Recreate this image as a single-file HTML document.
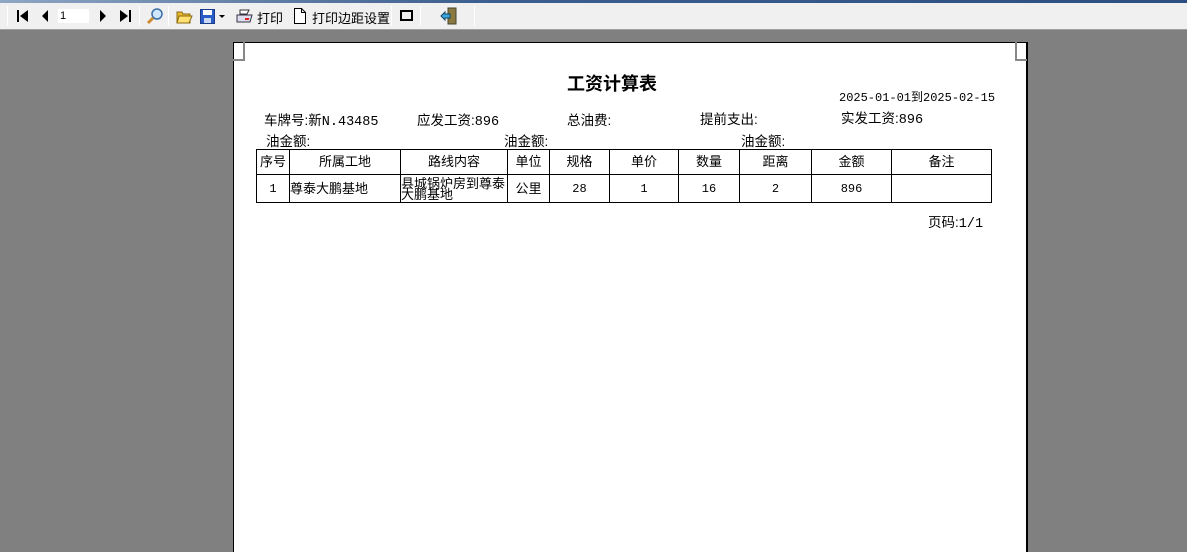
<!DOCTYPE html>
<html><head><meta charset="utf-8">
<style>
*{margin:0;padding:0;box-sizing:border-box}
html,body{width:1187px;height:552px;overflow:hidden}
body{background:#808080;position:relative;font-family:"Liberation Sans","Noto Sans CJK SC","WenQuanYi Zen Hei",sans-serif;font-size:13px;color:#000}
.a{position:absolute;white-space:nowrap}
.m{font-family:"Liberation Mono","Noto Sans CJK SC",monospace}
#tb{position:absolute;left:0;top:0;width:1187px;height:30px;background:#f0f0f0;border-bottom:1px solid #a0a0a0}
#tb .top{position:absolute;left:0;top:0;width:1187px;height:3px;background:linear-gradient(90deg,#8fa6c4,#3d5f8f 40%,#2b4f80)}
.sep{position:absolute;top:6px;width:1px;height:20px;background:#b0b0b0;border-right:1px solid #fff}
#page{position:absolute;left:233px;top:42px;width:795px;height:520px;background:#fff;border-left:1px solid #000;border-top:1px solid #000;border-right:2px solid #000}
.cm{position:absolute;border-color:#888;border-style:solid}
table{position:absolute;left:256px;top:149px;border-collapse:collapse;table-layout:fixed}
td{border:1px solid #000;text-align:center;padding:0;font-size:13px;line-height:12px}
td.n{font-family:"Liberation Mono",monospace;font-size:12px}
.l{font-size:13.5px}
</style></head><body>
<div id="tb"><div class="top"></div>
<div class="sep" style="left:7px"></div>
<svg class="a" style="left:16px;top:10px" width="14" height="12"><rect x="1" y="0" width="2" height="12"/><path d="M12 0L4 6L12 12Z"/></svg>
<svg class="a" style="left:40px;top:10px" width="10" height="12"><path d="M8 0L2 6L8 12Z"/></svg>
<div class="a" style="left:58px;top:9px;width:31px;height:14px;background:#fff;font-size:11px;line-height:14px;padding-left:2px">1</div>
<svg class="a" style="left:98px;top:10px" width="10" height="12"><path d="M2 0L8 6L2 12Z"/></svg>
<svg class="a" style="left:119px;top:10px" width="14" height="12"><path d="M1 0L9 6L1 12Z"/><rect x="10" y="0" width="2" height="12"/></svg>
<div class="sep" style="left:139px"></div>
<svg class="a" style="left:146px;top:7px" width="18" height="18"><circle cx="11" cy="7" r="5" fill="#cfe6ff" stroke="#3a6ea5" stroke-width="1.5"/><path d="M7 11L2 16" stroke="#d08a30" stroke-width="3"/></svg>
<div class="sep" style="left:168px"></div>
<svg class="a" style="left:176px;top:10px" width="17" height="14"><path d="M1 2h5l1 2h7v9H1Z" fill="#e8b830" stroke="#8a6a10"/><path d="M3 6h13l-3 7H1Z" fill="#ffe070" stroke="#8a6a10"/></svg>
<svg class="a" style="left:200px;top:9px" width="15" height="15"><rect x="0.5" y="0.5" width="14" height="14" fill="#2a5cc8" stroke="#1a3a8a"/><rect x="3" y="1" width="9" height="5" fill="#fff"/><rect x="4" y="9" width="7" height="5" fill="#c8d8f0"/></svg>
<svg class="a" style="left:219px;top:15px" width="6" height="4"><path d="M0 0h6L3 3Z"/></svg>
<svg class="a" style="left:236px;top:9px" width="18" height="14"><path d="M4 1h9l-2 4H4Z" fill="#fff" stroke="#333"/><path d="M1 6h15l-2 7H1Z" fill="#dde" stroke="#334"/><rect x="9" y="9" width="4" height="2" fill="#d22"/></svg>
<div class="a" style="left:257px;top:8px;font-size:13px">打印</div>
<svg class="a" style="left:294px;top:8px" width="12" height="16"><path d="M0.5 0.5h7l4 4v11h-11Z" fill="#fff" stroke="#000"/><path d="M7.5 0.5v4h4" fill="none" stroke="#000"/></svg>
<div class="a" style="left:312px;top:8px">打印边距设置</div>
<div class="sep" style="left:391px"></div>
<div class="a" style="left:400px;top:10px;width:13px;height:11px;border:2px solid #000"></div>
<div class="sep" style="left:420px"></div>
<svg class="a" style="left:440px;top:7px" width="18" height="18"><rect x="8" y="1" width="8" height="16" fill="#8a7a40" stroke="#443"/><path d="M1 9l4-4v2h5v4H5v2Z" fill="#3aa8e0" stroke="#146"/></svg>
<div class="sep" style="left:474px"></div>
</div>
<div id="page"></div>
<div class="cm" style="left:233px;top:42px;width:12px;height:19px;border-width:0 2px 2px 0"></div>
<div class="cm" style="left:1015px;top:42px;width:12px;height:19px;border-width:0 0 2px 2px"></div>
<div class="a" style="left:567px;top:70px;font-size:18px;font-weight:bold">工资计算表</div>
<div class="a m" style="left:839px;top:88px;font-size:12px">2025-01-01到2025-02-15</div>
<div class="a l" style="left:264px;top:109px">车牌号:<span class="m">新N.43485</span></div>
<div class="a l" style="left:417px;top:109px">应发工资:<span class="m">896</span></div>
<div class="a l" style="left:567px;top:109px">总油费:</div>
<div class="a l" style="left:700px;top:108px">提前支出:</div>
<div class="a l" style="left:841px;top:107px">实发工资:<span class="m">896</span></div>
<div class="a l" style="left:266px;top:130px">油金额:</div>
<div class="a l" style="left:504px;top:130px">油金额:</div>
<div class="a l" style="left:741px;top:130px">油金额:</div>
<table>
<colgroup><col style="width:33px"><col style="width:111px"><col style="width:107px"><col style="width:42px"><col style="width:60px"><col style="width:69px"><col style="width:61px"><col style="width:72px"><col style="width:80px"><col style="width:100px"></colgroup>
<tr style="height:25px"><td>序号</td><td>所属工地</td><td>路线内容</td><td>单位</td><td>规格</td><td>单价</td><td>数量</td><td>距离</td><td>金额</td><td>备注</td></tr>
<tr style="height:28px"><td class="n">1</td><td style="text-align:left">尊泰大鹏基地</td><td style="text-align:left;line-height:11px">县城锅炉房到尊泰大鹏基地</td><td>公里</td><td class="n">28</td><td class="n">1</td><td class="n">16</td><td class="n">2</td><td class="n">896</td><td></td></tr>
</table>
<div class="a l" style="left:928px;top:211px">页码:<span class="m">1/1</span></div>
</body></html>
